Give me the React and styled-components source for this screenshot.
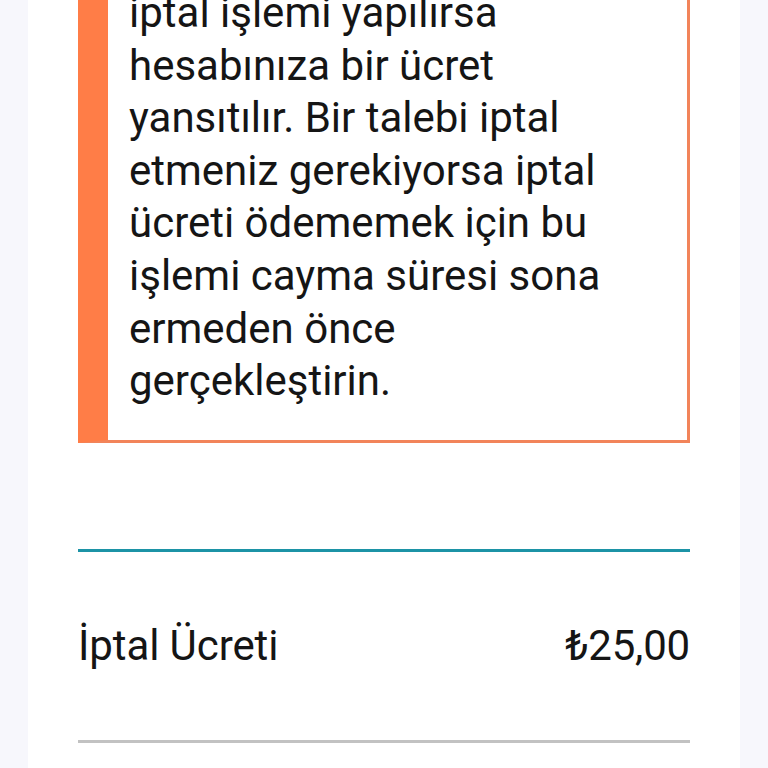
import styled, { createGlobalStyle } from 'styled-components';

const GlobalStyle = createGlobalStyle`
  html, body {
    margin: 0;
    padding: 0;
    background: #f7f7fc;
  }
  html {
    overflow: hidden;
  }
  body {
    font-family: Roboto, "Liberation Sans", sans-serif;
    color: #151515;
  }
`;

const Page = styled.div`
  padding: 0 28px;
`;

// the callout is scrolled up past the top edge, as in the screenshot
const Panel = styled.div`
  background: #fff;
  min-height: 840px;
  padding: 0 50px;
  margin-top: -48px;
`;

const Callout = styled.div`
  border-top: 3px solid #f2845a;
  border-right: 3px solid #f2845a;
  border-bottom: 3px solid #f2845a;
  border-left: 30px solid #ff7d47;
  padding: 32px 24px 32px 21px;
  font-size: 42px;
  line-height: 52.6px;
`;

const Divider = styled.hr`
  border: 0;
  height: 3px;
  margin: 0;
  background: ${(p) => p.color};
`;

const Spacer = styled.div`
  height: 106px;
`;

const Row = styled.div`
  display: flex;
  justify-content: space-between;
  align-items: center;
  padding: 68px 0;
  font-size: 42px;
  line-height: 52.6px;
`;

const Label = styled.span`
  letter-spacing: -0.1px;
`;

const Amount = styled.span`
  letter-spacing: -0.2px;
`;

export default function App() {
  return (
    <>
      <GlobalStyle />
      <Page>
        <Panel>
          <Callout>
            iptal işlemi yapılırsa hesabınıza bir ücret yansıtılır. Bir talebi
            iptal etmeniz gerekiyorsa iptal ücreti ödememek için bu işlemi
            cayma süresi sona ermeden önce gerçekleştirin.
          </Callout>
          <Spacer />
          <Divider color="#1c93a6" />
          <Row>
            <Label>İptal Ücreti</Label>
            <Amount>₺25,00</Amount>
          </Row>
          <Divider color="#c2c2c2" />
        </Panel>
      </Page>
    </>
  );
}
